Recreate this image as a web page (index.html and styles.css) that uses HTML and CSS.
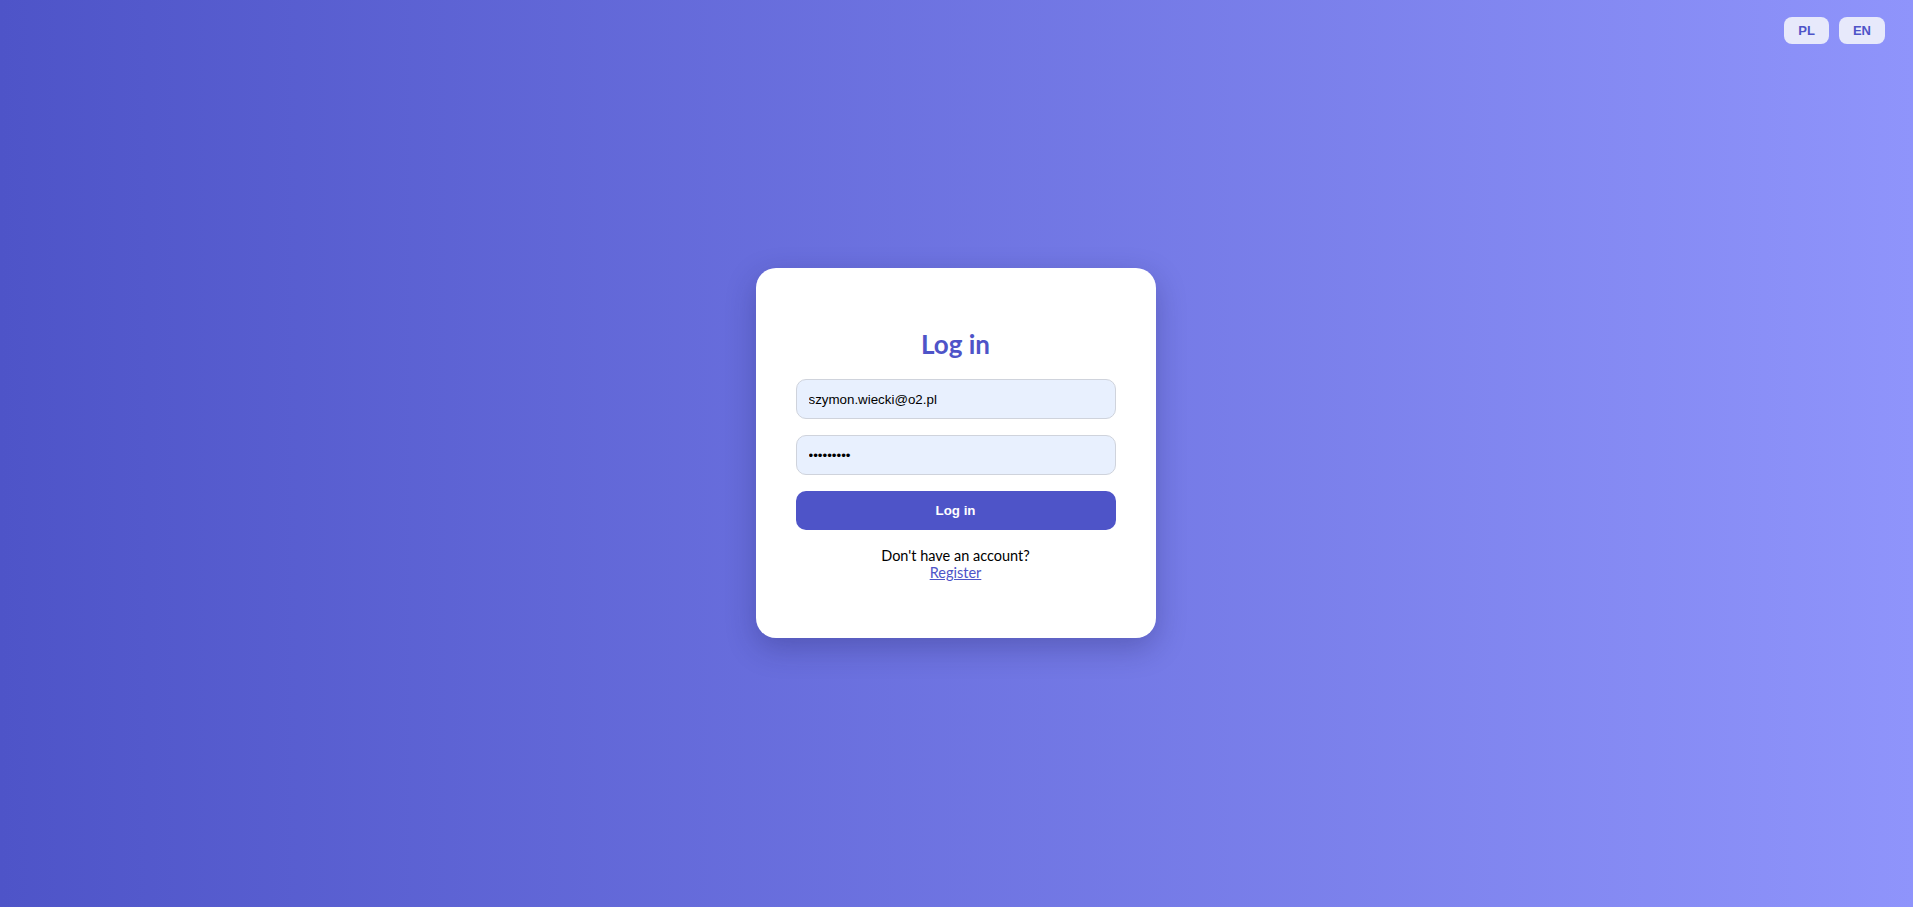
FILE: index.html
```html
<!DOCTYPE html>
<html lang="en">
<head>
<meta charset="utf-8">
<title>Log in</title>
<link rel="stylesheet" href="styles.css">
</head>
<body>
<div class="lang-switch">
  <button class="lang-btn">PL</button>
  <button class="lang-btn">EN</button>
</div>
<main class="page">
  <div class="card">
    <h2 class="title">Log in</h2>
    <form class="form">
      <input class="field" type="email" value="szymon.wiecki@o2.pl">
      <input class="field" type="password" value="123456789">
      <button type="button" class="submit">Log in</button>
    </form>
    <p class="switch">Don't have an account?<br><a href="#" class="link">Register</a></p>
  </div>
</main>
</body>
</html>
```
FILE: styles.css
```css
html, body {
  margin: 0;
  height: 100%;
}
body {
  background: linear-gradient(to right, #4e54c8, #8f94fb);
  font-family: Lato, "Noto Sans", sans-serif;
  overflow: hidden;
}
.lang-switch {
  position: absolute;
  top: 17px;
  right: 28px;
  display: flex;
  gap: 10px;
}
.lang-btn {
  border: none;
  background: #e7e9fb;
  color: #4e54c8;
  font-family: "Liberation Sans", Arial, sans-serif;
  font-weight: bold;
  font-size: 13px;
  line-height: 15px;
  padding: 6px 14px;
  border-radius: 8px;
}
.page {
  height: 100%;
  display: flex;
  align-items: center;
  justify-content: center;
}
.card {
  width: 320px;
  height: 290px;
  padding: 40px;
  margin: 0 2px 1px 0;
  background: #fff;
  border-radius: 20px;
  box-shadow: 0 10px 30px rgba(30, 30, 90, 0.3);
  text-align: center;
}
.title {
  margin: 19px 0 17px;
  font-size: 26px;
  line-height: 35px;
  font-weight: 700;
  color: #4e54c8;
}
.form {
  display: flex;
  flex-direction: column;
  gap: 16px;
}
.field {
  box-sizing: border-box;
  height: 40px;
  margin: 0;
  padding: 0 12px;
  border: 1px solid #cfd3dc;
  border-radius: 10px;
  background: #e8f0fe;
  font-family: "Liberation Sans", Arial, sans-serif;
  font-size: 13.33px;
  color: #000;
  outline: none;
}
.submit {
  height: 39px;
  border: none;
  border-radius: 10px;
  background: #4e54c8;
  color: #fff;
  font-family: "Liberation Sans", Arial, sans-serif;
  font-weight: bold;
  font-size: 13.33px;
}
.switch {
  margin: 17px 0 0;
  font-size: 14.5px;
  line-height: 17px;
  color: #000;
}
.link {
  color: #4e54c8;
}
```
